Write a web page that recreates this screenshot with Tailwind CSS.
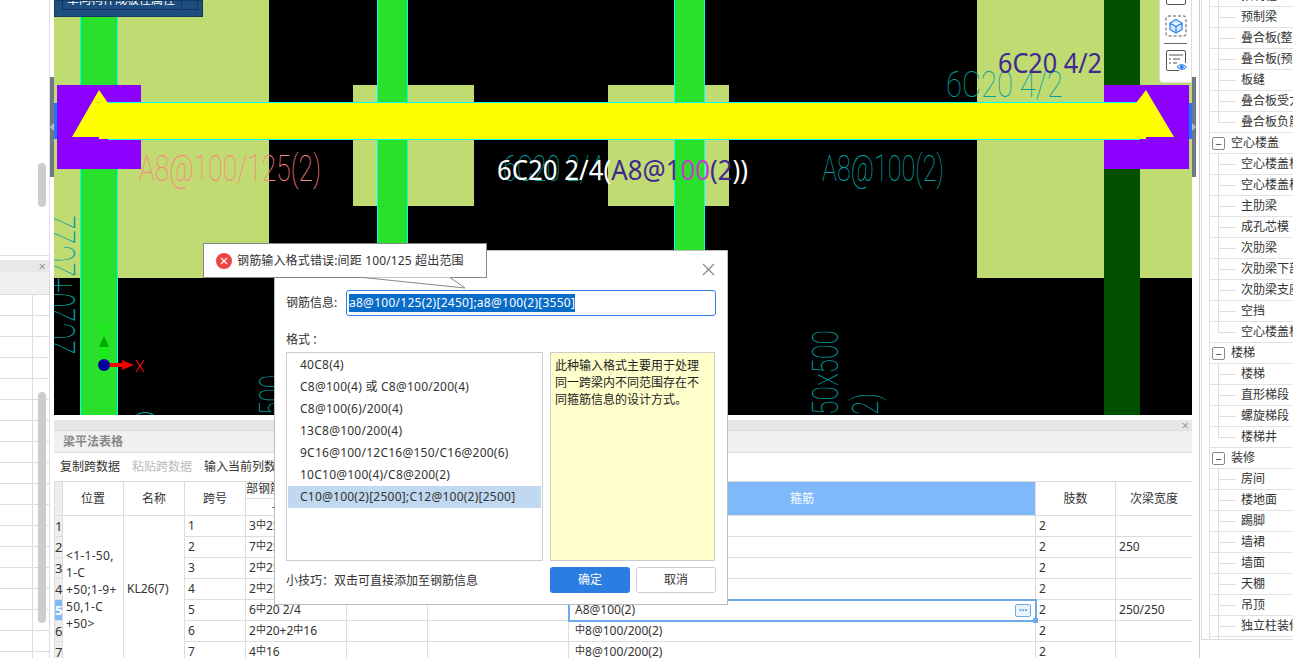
<!DOCTYPE html>
<html lang="zh">
<head>
  <meta charset="UTF-8">
  <title>梁平法表格</title>
  <script src="https://cdn.jsdelivr.net/npm/@tailwindcss/browser@4"></script>
</head>
<body class="bg-white font-['Noto_Sans','Noto_Sans_CJK_SC',sans-serif] text-[12px] text-[#333]">
<div class="relative flex h-[658px] w-[1293px] overflow-hidden">

  <!-- left panel -->
  <aside class="flex w-[50px] flex-col border-r border-[#ddd]">
    <div class="relative h-[256px] border-b border-[#ddd]">
      <div class="absolute left-[38px] top-[163px] h-[44px] w-[8px] rounded bg-[#ccc]"></div>
    </div>
    <div class="relative mt-[4px] flex flex-1 flex-col">
      <div class="flex h-[12px] justify-end bg-[#e8e8e8] pr-[3px] text-[13px] leading-[12px] text-[#999]">×</div>
      <div class="h-[23px] border-b border-[#ddd] bg-[#f0f0f0]"></div>
      <div class="flex-1 bg-[repeating-linear-gradient(#fff_0,#fff_20px,#ddd_20px,#ddd_21px)]"><div class="h-full w-[33px] border-r border-[#ddd]"></div></div>
      <div class="absolute left-[38px] top-[132px] h-[231px] w-[8px] rounded bg-[#ccc]"></div>
    </div>
  </aside>

  <!-- left handle -->
  <div class="flex w-[4px] flex-col"><div class="mt-[77px] flex h-[100px] items-center bg-[#6d7a85]"><span class="h-0 w-0 border-y-[4px] border-r-[4px] border-y-transparent border-r-[#bbb]"></span></div></div>

  <!-- centre -->
  <main class="flex w-[1138px] flex-col">
    <div class="relative h-[415px] shrink-0 overflow-hidden bg-black">
      <svg class="block" width="1138" height="415" viewBox="54 0 1138 415">
        <rect x="54" y="0" width="215" height="278" fill="#c1db73"/>
        <rect x="977" y="0" width="215" height="278" fill="#c1db73"/>
        <rect x="353" y="85" width="121" height="121" fill="#c1db73"/>
        <rect x="608" y="85" width="121" height="121" fill="#c1db73"/>
        <rect x="80.5" y="-1" width="37" height="417" fill="#29e02b" stroke="#0ff"/>
        <rect x="377.5" y="-1" width="30" height="417" fill="#29e02b" stroke="#0ff"/>
        <rect x="674.5" y="-1" width="30" height="417" fill="#29e02b" stroke="#0ff"/>
        <rect x="1104" y="0" width="36" height="415" fill="#005000"/>
        <rect x="54" y="103" width="3" height="36" fill="#1a78ff"/>
        <rect x="1189" y="103" width="3" height="36" fill="#1a78ff"/>
        <rect x="57" y="85" width="84" height="84" fill="#8c00ff"/>
        <rect x="1104" y="85" width="85" height="84" fill="#8c00ff"/>
        <path d="M108 102.500H1140M108 139.500H1140" stroke="#0ff"/>
        <path d="M99 90L72 137H99V139H1146V137H1174L1146 90L1136 103H108Z" fill="#ff0"/>

        <!-- cad text -->
        <g font-family="Roboto" font-weight="100">
          <text x="139" y="181" font-size="37" fill="#ff8080" textLength="182" lengthAdjust="spacingAndGlyphs">A8@100/125(2)</text>
          <text x="822" y="181" font-size="37" fill="#00a0a0" textLength="122" lengthAdjust="spacingAndGlyphs">A8@100(2)</text>
          <text x="946" y="97" font-size="37" fill="#00a0a0" textLength="117" lengthAdjust="spacingAndGlyphs">6C20 4/2</text>
          <text x="503" y="181" font-size="37" fill="#00a0a0" textLength="100" lengthAdjust="spacingAndGlyphs">6C20 2/4</text>
          <text transform="translate(75 355) rotate(-90)" font-size="50" fill="#00a0a0" textLength="140" lengthAdjust="spacingAndGlyphs">2C20+2C22</text>
          <text transform="translate(285 415) rotate(-90)" font-size="37" fill="#00a0a0" textLength="40" lengthAdjust="spacingAndGlyphs">500</text>
          <text transform="translate(838 415) rotate(-90)" font-size="37" fill="#00a0a0" textLength="85" lengthAdjust="spacingAndGlyphs">50x500</text>
          <text transform="translate(878 415) rotate(-90)" font-size="37" fill="#00a0a0" textLength="22" lengthAdjust="spacingAndGlyphs">2)</text>
          <text x="130" y="438" font-size="37" fill="#00a0a0" textLength="30" lengthAdjust="spacingAndGlyphs">0</text>
        </g>
        <text x="998" y="73" font-family="Noto Sans" font-size="27" fill="#3f2a90" textLength="104" lengthAdjust="spacingAndGlyphs">6C20 4/2</text>
        <text x="497" y="180" font-family="Noto Sans" font-size="27" fill="#fff" textLength="251" lengthAdjust="spacingAndGlyphs">6C20 2/4(<tspan fill="#3f2a90">A8@1</tspan><tspan fill="#c83cc8">00</tspan><tspan fill="#3f2a90">(2</tspan>))</text>

        <!-- axes -->
        <path d="M104 345V362" stroke="#0f0" stroke-width="3"/>
        <path d="M104 336L99 347H109Z" fill="#0a0"/>
        <path d="M100 324L104 330L108 324M104 330V336" stroke="#0f0" fill="none"/>
        <path d="M108 365H124" stroke="#f00" stroke-width="4"/>
        <path d="M122 360L134 365L122 370Z" fill="#e00"/>
        <path d="M136 360L144 372M144 360L136 372" stroke="#f00" stroke-width="1.200"/>
        <circle cx="104" cy="365" r="6" fill="#00009c"/>
      </svg>

      <!-- clipped property panel -->
      <div class="absolute left-0 top-0 h-[17px] w-[149px] overflow-hidden border border-[#16395f] bg-[#1d4e80] pl-[7px]">
        <div class="flex h-[9px] w-[136px] items-end border-x border-b border-[#12345a]">
          <span class="mb-[2px] w-[118px] whitespace-nowrap pl-[4px] text-[12px] leading-[14px] text-white">单向构件成板性属性</span>
          <span class="h-full border-l border-[#12345a]"></span>
        </div>
      </div>

      <!-- view toolbar -->
      <div class="absolute right-0 top-0 flex h-[83px] w-[33px] flex-col items-center rounded-bl border border-t-0 border-[#ddd] bg-white">
        <svg class="mt-[-1px]" width="22" height="7" viewBox="0 0 22 7"><path d="M1.500 0V4Q1.500 5.500 3 5.500H19Q20.500 5.500 20.500 4V0" fill="none" stroke="#555"/></svg>
        <svg class="mt-[9px]" width="22" height="22" viewBox="0 0 22 22">
          <rect x="1" y="1" width="20" height="20" rx="2" fill="none" stroke="#555" stroke-dasharray="3 2"/>
          <path d="M11 4.500L17 8V14.500L11 18L5 14.500V8ZM5 8L11 11.500L17 8M11 11.500V18" fill="#d8e9ff" stroke="#2f86ee" stroke-width="1.300"/>
        </svg>
        <div class="mt-[6px] h-[1px] w-[23px] bg-[#666]"></div>
        <svg class="mt-[6px]" width="22" height="22" viewBox="0 0 22 22">
          <path d="M14 20.500H3Q1.500 20.500 1.500 19V2Q1.500 .5 3 .5H19Q20.500 .5 20.500 2V13" fill="none" stroke="#555"/>
          <path d="M4 5H18M4 9H6M8 9H15M4 13H6M8 13H12" stroke="#555"/>
          <path d="M12 17Q16.500 12 21.500 17Q16.500 22 12 17Z" fill="#cfe3fb" stroke="#2f86ee"/>
          <circle cx="16.700" cy="17" r="2" fill="#2f86ee"/>
        </svg>
      </div>
    </div>

    <!-- table panel -->
    <section class="mt-[5px] flex min-h-0 flex-1 flex-col overflow-hidden">
      <div class="flex h-[11px] shrink-0 justify-end border-b border-[#ddd] bg-[#e6e6e6] pr-[3px] text-[13px] leading-[11px] text-[#999]">×</div>
      <div class="flex h-[22px] shrink-0 items-center border-b border-[#ddd] bg-[#f0f0f0] pl-[9px] font-bold text-[#888]">梁平法表格</div>
      <div class="flex h-[28px] shrink-0 items-center gap-[12px] pl-[6px]">
        <span>复制跨数据</span>
        <span class="text-[#bbb]">粘贴跨数据</span>
        <span>输入当前列数据</span>
      </div>
      <table class="w-[1138px] shrink-0 table-fixed border-collapse [&_td]:h-[21px] [&_td]:border [&_td]:border-[#ddd] [&_td]:px-[3px] [&_td]:py-0 [&_td]:leading-[14px] [&_th]:border [&_th]:border-[#ddd] [&_th]:font-normal">
        <colgroup>
          <col class="w-[8px]"><col class="w-[61px]"><col class="w-[61px]"><col class="w-[61px]"><col class="w-[101px]"><col class="w-[81px]"><col class="w-[141px]"><col class="w-[467px]"><col class="w-[80px]"><col class="w-[77px]">
        </colgroup>
        <thead>
          <tr class="h-[17px]">
            <th rowspan="2" class="bg-[#eee]"></th>
            <th rowspan="2">位置</th>
            <th rowspan="2">名称</th>
            <th rowspan="2">跨号</th>
            <th colspan="2" class="p-0"><div class="h-[16px] overflow-hidden whitespace-nowrap text-left leading-[14px]"><span class="ml-[-12px] inline-block">上部钢筋</span></div></th>
            <th rowspan="2"></th>
            <th rowspan="2" class="bg-[#7fb9fa] font-medium text-white">箍筋</th>
            <th rowspan="2">肢数</th>
            <th rowspan="2">次梁宽度</th>
          </tr>
          <tr class="h-[17px]">
            <th class="pl-[26px] text-left leading-[14px]">-</th>
            <th></th>
          </tr>
        </thead>
        <tbody>
          <tr>
            <td class="bg-[#eee] !px-0 text-[13px]">1</td>
            <td rowspan="7" class="align-middle !leading-[17px] tracking-[0.3px]">&lt;1-1-50,<br>1-C<br>+50;1-9+<br>50,1-C<br>+50&gt;</td>
            <td rowspan="7">KL26(7)</td>
            <td>1</td>
            <td>3<span class="relative top-[-2px] text-[10px]">中</span>25</td>
            <td></td><td></td>
            <td>A8@100(2)</td>
            <td>2</td><td></td>
          </tr>
          <tr>
            <td class="bg-[#eee] !px-0 text-[13px]">2</td>
            <td>2</td>
            <td>7<span class="relative top-[-2px] text-[10px]">中</span>25</td>
            <td></td><td></td><td></td>
            <td>2</td><td>250</td>
          </tr>
          <tr>
            <td class="bg-[#eee] !px-0 text-[13px]">3</td>
            <td>3</td>
            <td>2<span class="relative top-[-2px] text-[10px]">中</span>25</td>
            <td></td><td></td><td></td>
            <td>2</td><td></td>
          </tr>
          <tr>
            <td class="bg-[#eee] !px-0 text-[13px]">4</td>
            <td>4</td>
            <td>2<span class="relative top-[-2px] text-[10px]">中</span>25</td>
            <td></td><td></td><td></td>
            <td>2</td><td></td>
          </tr>
          <tr>
            <td class="bg-[#7fb9fa] !px-0 text-[13px] font-bold text-white">5</td>
            <td>5</td>
            <td>6<span class="relative top-[-2px] text-[10px]">中</span>20 2/4</td>
            <td></td><td></td>
            <td class="relative outline-2 -outline-offset-1 outline-[#6eaae8]">
              <div class="flex items-center justify-between pl-[3px] pr-[1px]">
                <span>A8@100(2)</span>
                <span class="flex h-[13px] w-[16px] items-center justify-center rounded-[2px] border border-[#6eaae8] bg-[#eaf2fb] text-[10px] font-bold leading-[8px] text-[#2f86ee]">···</span>
              </div>
              <span class="absolute bottom-[-3px] right-[-3px] h-[5px] w-[5px] bg-[#6eaae8]"></span>
            </td>
            <td>2</td><td>250/250</td>
          </tr>
          <tr>
            <td class="bg-[#eee] !px-0 text-[13px]">6</td>
            <td>6</td>
            <td>2<span class="relative top-[-2px] text-[10px]">中</span>20+2<span class="relative top-[-2px] text-[10px]">中</span>16</td>
            <td></td><td></td>
            <td class="!pl-[6px]"><span class="relative top-[-2px] text-[10px]">中</span>8@100/200(2)</td>
            <td>2</td><td></td>
          </tr>
          <tr>
            <td class="bg-[#eee] !px-0 text-[13px]">7</td>
            <td>7</td>
            <td>4<span class="relative top-[-2px] text-[10px]">中</span>16</td>
            <td></td><td></td>
            <td class="!pl-[6px]"><span class="relative top-[-2px] text-[10px]">中</span>8@100/200(2)</td>
            <td>2</td><td></td>
          </tr>
        </tbody>
      </table>
    </section>
  </main>

  <!-- right handle -->
  <div class="flex w-[4px] flex-col"><div class="mt-[77px] flex h-[100px] items-center bg-[#6d7a85]"><span class="h-0 w-0 border-y-[4px] border-l-[4px] border-y-transparent border-l-[#bbb]"></span></div></div>

  <!-- right tree -->
  <aside class="ml-[3px] flex-1 overflow-hidden border-l border-[#ccc] pl-[1px]">
    <div class="mt-[-14px] h-[654px] overflow-hidden border-b border-l border-[#ddd] pl-[7px] text-[12px] whitespace-nowrap">
      <div class="flex h-[21px] items-center border-b border-l border-[#e2e2e2]"><span class="ml-[8px] flex h-full w-[18px] shrink-0 items-center border-l border-[#ddd]"><i class="h-px w-full bg-[#ddd]"></i></span><span class="ml-[5px]">预制柱</span></div>
      <div class="flex h-[21px] items-center border-b border-l border-[#e2e2e2]"><span class="ml-[8px] flex h-full w-[18px] shrink-0 items-center border-l border-[#ddd]"><i class="h-px w-full bg-[#ddd]"></i></span><span class="ml-[5px]">预制梁</span></div>
      <div class="flex h-[21px] items-center border-b border-l border-[#e2e2e2]"><span class="ml-[8px] flex h-full w-[18px] shrink-0 items-center border-l border-[#ddd]"><i class="h-px w-full bg-[#ddd]"></i></span><span class="ml-[5px]">叠合板(整厚)</span></div>
      <div class="flex h-[21px] items-center border-b border-l border-[#e2e2e2]"><span class="ml-[8px] flex h-full w-[18px] shrink-0 items-center border-l border-[#ddd]"><i class="h-px w-full bg-[#ddd]"></i></span><span class="ml-[5px]">叠合板(预制)</span></div>
      <div class="flex h-[21px] items-center border-b border-l border-[#e2e2e2]"><span class="ml-[8px] flex h-full w-[18px] shrink-0 items-center border-l border-[#ddd]"><i class="h-px w-full bg-[#ddd]"></i></span><span class="ml-[5px]">板缝</span></div>
      <div class="flex h-[21px] items-center border-b border-l border-[#e2e2e2]"><span class="ml-[8px] flex h-full w-[18px] shrink-0 items-center border-l border-[#ddd]"><i class="h-px w-full bg-[#ddd]"></i></span><span class="ml-[5px]">叠合板受力筋</span></div>
      <div class="flex h-[21px] items-center border-b border-l border-[#e2e2e2]"><span class="ml-[8px] h-[11px] w-[18px] shrink-0 self-start border-b border-l border-[#ddd]"></span><span class="ml-[5px]">叠合板负筋</span></div>
      <div class="flex h-[21px] items-center border-b border-l border-[#e2e2e2] pl-[2px]"><span class="mr-[6px] flex h-[13px] w-[13px] shrink-0 items-center justify-center rounded-[2px] border border-[#888] text-[11px] leading-none">−</span>空心楼盖</div>
      <div class="flex h-[21px] items-center border-b border-l border-[#e2e2e2]"><span class="ml-[8px] flex h-full w-[18px] shrink-0 items-center border-l border-[#ddd]"><i class="h-px w-full bg-[#ddd]"></i></span><span class="ml-[5px]">空心楼盖板</span></div>
      <div class="flex h-[21px] items-center border-b border-l border-[#e2e2e2]"><span class="ml-[8px] flex h-full w-[18px] shrink-0 items-center border-l border-[#ddd]"><i class="h-px w-full bg-[#ddd]"></i></span><span class="ml-[5px]">空心楼盖柱帽</span></div>
      <div class="flex h-[21px] items-center border-b border-l border-[#e2e2e2]"><span class="ml-[8px] flex h-full w-[18px] shrink-0 items-center border-l border-[#ddd]"><i class="h-px w-full bg-[#ddd]"></i></span><span class="ml-[5px]">主肋梁</span></div>
      <div class="flex h-[21px] items-center border-b border-l border-[#e2e2e2]"><span class="ml-[8px] flex h-full w-[18px] shrink-0 items-center border-l border-[#ddd]"><i class="h-px w-full bg-[#ddd]"></i></span><span class="ml-[5px]">成孔芯模</span></div>
      <div class="flex h-[21px] items-center border-b border-l border-[#e2e2e2]"><span class="ml-[8px] flex h-full w-[18px] shrink-0 items-center border-l border-[#ddd]"><i class="h-px w-full bg-[#ddd]"></i></span><span class="ml-[5px]">次肋梁</span></div>
      <div class="flex h-[21px] items-center border-b border-l border-[#e2e2e2]"><span class="ml-[8px] flex h-full w-[18px] shrink-0 items-center border-l border-[#ddd]"><i class="h-px w-full bg-[#ddd]"></i></span><span class="ml-[5px]">次肋梁下部</span></div>
      <div class="flex h-[21px] items-center border-b border-l border-[#e2e2e2]"><span class="ml-[8px] flex h-full w-[18px] shrink-0 items-center border-l border-[#ddd]"><i class="h-px w-full bg-[#ddd]"></i></span><span class="ml-[5px]">次肋梁支座</span></div>
      <div class="flex h-[21px] items-center border-b border-l border-[#e2e2e2]"><span class="ml-[8px] flex h-full w-[18px] shrink-0 items-center border-l border-[#ddd]"><i class="h-px w-full bg-[#ddd]"></i></span><span class="ml-[5px]">空挡</span></div>
      <div class="flex h-[21px] items-center border-b border-l border-[#e2e2e2]"><span class="ml-[8px] h-[11px] w-[18px] shrink-0 self-start border-b border-l border-[#ddd]"></span><span class="ml-[5px]">空心楼盖板</span></div>
      <div class="flex h-[21px] items-center border-b border-l border-[#e2e2e2] pl-[2px]"><span class="mr-[6px] flex h-[13px] w-[13px] shrink-0 items-center justify-center rounded-[2px] border border-[#888] text-[11px] leading-none">−</span>楼梯</div>
      <div class="flex h-[21px] items-center border-b border-l border-[#e2e2e2]"><span class="ml-[8px] flex h-full w-[18px] shrink-0 items-center border-l border-[#ddd]"><i class="h-px w-full bg-[#ddd]"></i></span><span class="ml-[5px]">楼梯</span></div>
      <div class="flex h-[21px] items-center border-b border-l border-[#e2e2e2]"><span class="ml-[8px] flex h-full w-[18px] shrink-0 items-center border-l border-[#ddd]"><i class="h-px w-full bg-[#ddd]"></i></span><span class="ml-[5px]">直形梯段</span></div>
      <div class="flex h-[21px] items-center border-b border-l border-[#e2e2e2]"><span class="ml-[8px] flex h-full w-[18px] shrink-0 items-center border-l border-[#ddd]"><i class="h-px w-full bg-[#ddd]"></i></span><span class="ml-[5px]">螺旋梯段</span></div>
      <div class="flex h-[21px] items-center border-b border-l border-[#e2e2e2]"><span class="ml-[8px] h-[11px] w-[18px] shrink-0 self-start border-b border-l border-[#ddd]"></span><span class="ml-[5px]">楼梯井</span></div>
      <div class="flex h-[21px] items-center border-b border-l border-[#e2e2e2] pl-[2px]"><span class="mr-[6px] flex h-[13px] w-[13px] shrink-0 items-center justify-center rounded-[2px] border border-[#888] text-[11px] leading-none">−</span>装修</div>
      <div class="flex h-[21px] items-center border-b border-l border-[#e2e2e2]"><span class="ml-[8px] flex h-full w-[18px] shrink-0 items-center border-l border-[#ddd]"><i class="h-px w-full bg-[#ddd]"></i></span><span class="ml-[5px]">房间</span></div>
      <div class="flex h-[21px] items-center border-b border-l border-[#e2e2e2]"><span class="ml-[8px] flex h-full w-[18px] shrink-0 items-center border-l border-[#ddd]"><i class="h-px w-full bg-[#ddd]"></i></span><span class="ml-[5px]">楼地面</span></div>
      <div class="flex h-[21px] items-center border-b border-l border-[#e2e2e2]"><span class="ml-[8px] flex h-full w-[18px] shrink-0 items-center border-l border-[#ddd]"><i class="h-px w-full bg-[#ddd]"></i></span><span class="ml-[5px]">踢脚</span></div>
      <div class="flex h-[21px] items-center border-b border-l border-[#e2e2e2]"><span class="ml-[8px] flex h-full w-[18px] shrink-0 items-center border-l border-[#ddd]"><i class="h-px w-full bg-[#ddd]"></i></span><span class="ml-[5px]">墙裙</span></div>
      <div class="flex h-[21px] items-center border-b border-l border-[#e2e2e2]"><span class="ml-[8px] flex h-full w-[18px] shrink-0 items-center border-l border-[#ddd]"><i class="h-px w-full bg-[#ddd]"></i></span><span class="ml-[5px]">墙面</span></div>
      <div class="flex h-[21px] items-center border-b border-l border-[#e2e2e2]"><span class="ml-[8px] flex h-full w-[18px] shrink-0 items-center border-l border-[#ddd]"><i class="h-px w-full bg-[#ddd]"></i></span><span class="ml-[5px]">天棚</span></div>
      <div class="flex h-[21px] items-center border-b border-l border-[#e2e2e2]"><span class="ml-[8px] flex h-full w-[18px] shrink-0 items-center border-l border-[#ddd]"><i class="h-px w-full bg-[#ddd]"></i></span><span class="ml-[5px]">吊顶</span></div>
      <div class="flex h-[21px] items-center border-b border-l border-[#e2e2e2]"><span class="ml-[8px] flex h-full w-[18px] shrink-0 items-center border-l border-[#ddd]"><i class="h-px w-full bg-[#ddd]"></i></span><span class="ml-[5px]">独立柱装修</span></div>
      <div class="h-[3px] border-l border-[#e2e2e2]"><div class="ml-[8px] h-full border-l border-[#ddd]"></div></div>
    </div>
  </aside>

  <!-- dialog -->
  <div class="absolute left-[274px] top-[250px] flex h-[355px] w-[454px] flex-col border border-[#bbb] bg-white px-[11px]">
    <svg class="absolute right-[12px] top-[12px]" width="13" height="13" viewBox="0 0 13 13"><path d="M1 1L12 12M12 1L1 12" stroke="#888" stroke-width="1.200"/></svg>
    <div class="mt-[39px] flex h-[26px] items-center">
      <span class="w-[60px]">钢筋信息:</span>
      <div class="flex h-[26px] w-[370px] items-center rounded-[3px] border border-[#2f80ed] pl-[2px]"><span class="bg-[#0a6cc9] text-[12px] leading-[18px] tracking-[0.26px] text-white">a8@100/125(2)[2450];a8@100(2)[3550]</span></div>
    </div>
    <div class="mt-[14px] h-[22px] leading-[18px]">格式<span class="ml-[2px] font-['Noto_Sans_CJK_TC']">：</span></div>
    <div class="flex h-[209px] gap-[7px]">
      <ul class="w-[257px] border border-[#ccc] p-px tracking-[0.24px]">
        <li class="flex h-[22px] items-center pl-[12px]">40C8(4)</li>
        <li class="flex h-[22px] items-center pl-[12px]">C8@100(4) 或 C8@100/200(4)</li>
        <li class="flex h-[22px] items-center pl-[12px]">C8@100(6)/200(4)</li>
        <li class="flex h-[22px] items-center pl-[12px]">13C8@100/200(4)</li>
        <li class="flex h-[22px] items-center pl-[12px]">9C16@100/12C16@150/C16@200(6)</li>
        <li class="flex h-[22px] items-center pl-[12px]">10C10@100(4)/C8@200(2)</li>
        <li class="flex h-[22px] items-center bg-[#c0d8f0] pl-[12px]">C10@100(2)[2500];C12@100(2)[2500]</li>
      </ul>
      <p class="w-[165px] border border-[#ccc] bg-[#ffc] px-[4px] pt-[4px] leading-[17px] text-[#222]">此种输入格式主要用于处理同一跨梁内不同范围存在不同箍筋信息的设计方式。</p>
    </div>
    <div class="mt-[6px] flex items-center">
      <span class="w-[264px]">小技巧<span class="font-['Noto_Sans_CJK_TC']">：</span>双击可直接添加至钢筋信息</span>
      <button class="h-[26px] w-[80px] rounded-[3px] bg-[#2b7de1] text-white">确定</button>
      <button class="ml-[6px] h-[26px] w-[80px] rounded-[3px] border border-[#ccc] bg-white">取消</button>
    </div>
  </div>

  <!-- error tooltip -->
  <div class="absolute left-[203px] top-[243px] flex h-[35px] w-[284px] items-center border border-[#888] bg-white pl-[12px]">
    <svg width="16" height="16" viewBox="0 0 16 16"><circle cx="8" cy="8" r="8" fill="#ee4444"/><path d="M5 5L11 11M11 5L5 11" stroke="#fff" stroke-width="1.100"/></svg>
    <span class="ml-[5px] tracking-[0.15px]">钢筋输入格式错误:间距 100/125 超出范围</span>
  </div>
  <svg class="absolute left-[360px] top-[277px]" width="110" height="12" viewBox="0 0 110 12"><path d="M3 .5L105 11L90 .5" fill="#fff" stroke="#888"/></svg>
</div>
</body>
</html>
